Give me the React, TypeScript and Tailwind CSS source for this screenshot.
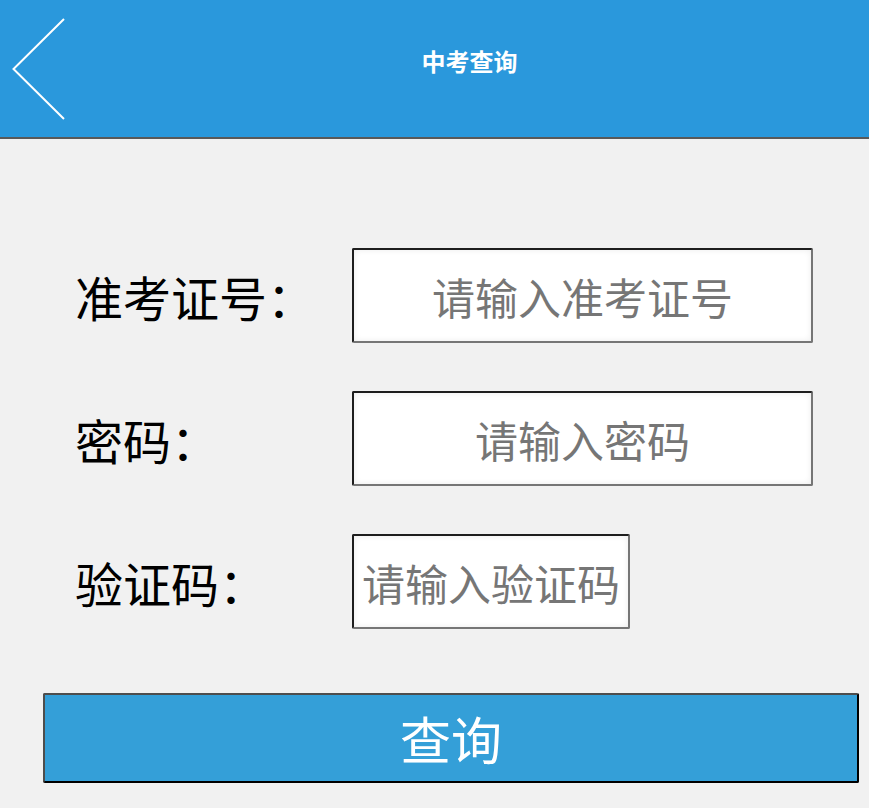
import React, { useState } from 'react';

const FONT = { fontFamily: '"Noto Sans CJK SC", "Noto Sans", sans-serif' };

interface FieldProps {
    label: string;
    placeholder: string;
    value: string;
    onChange: (v: string) => void;
    narrow?: boolean;
    type?: string;
}

const Field: React.FC<FieldProps> = ({ label, placeholder, value, onChange, narrow, type = 'text' }) => (
    <div className="flex items-center">
        <label className="w-[277px] shrink-0 text-[48px] leading-none text-black">{label}</label>
        <input
            type={type}
            value={value}
            onChange={e => onChange(e.target.value)}
            placeholder={placeholder}
            className={`h-[95px] ${narrow ? 'w-[278px]' : 'w-[461px]'} rounded-[2px] border-2 border-t-[#1e1e1e] border-l-[#1e1e1e] border-b-[#767676] border-r-[#767676] bg-white px-2 text-center text-[43px] text-black shadow-[inset_0_0_6px_rgba(0,0,0,0.08)] outline-none placeholder:text-[#767676]`}
        />
    </div>
);

const App: React.FC = () => {
    const [ticket, setTicket] = useState('');
    const [password, setPassword] = useState('');
    const [code, setCode] = useState('');

    return (
        <div className="min-h-[808px] w-full bg-[#f1f1f1]" style={FONT}>
            <header className="flex h-[139px] items-center border-b-2 border-[#595959] bg-[#2a98dc]">
                <button type="button" className="flex h-full w-[70px] shrink-0 items-center pl-[12px]" aria-label="返回">
                    <svg width="54" height="102" viewBox="0 0 54 102" fill="none">
                        <path d="M52 1 L1.5 51 L52 101" stroke="white" strokeWidth="2" />
                    </svg>
                </button>
                <h1 className="flex-1 pb-[16px] text-center text-[24px] font-bold text-white">中考查询</h1>
            </header>

            <form onSubmit={e => e.preventDefault()} className="flex flex-col">
                <div className="flex flex-col gap-[48px] pl-[75px] pt-[109px]">
                    <Field label="准考证号：" placeholder="请输入准考证号" value={ticket} onChange={setTicket} />
                    <Field label="密码：" placeholder="请输入密码" value={password} onChange={setPassword} type="password" />
                    <Field label="验证码：" placeholder="请输入验证码" value={code} onChange={setCode} narrow />
                </div>
                <div className="pl-[43px] pt-[64px]">
                    <button
                        type="submit"
                        className="h-[90px] w-[816px] rounded-[2px] border-2 border-t-[#4d4d4d] border-l-[#4d4d4d] border-b-black border-r-black bg-[#349fd8] text-[51px] text-white"
                    >
                        查询
                    </button>
                </div>
            </form>
        </div>
    );
};

export default App;
